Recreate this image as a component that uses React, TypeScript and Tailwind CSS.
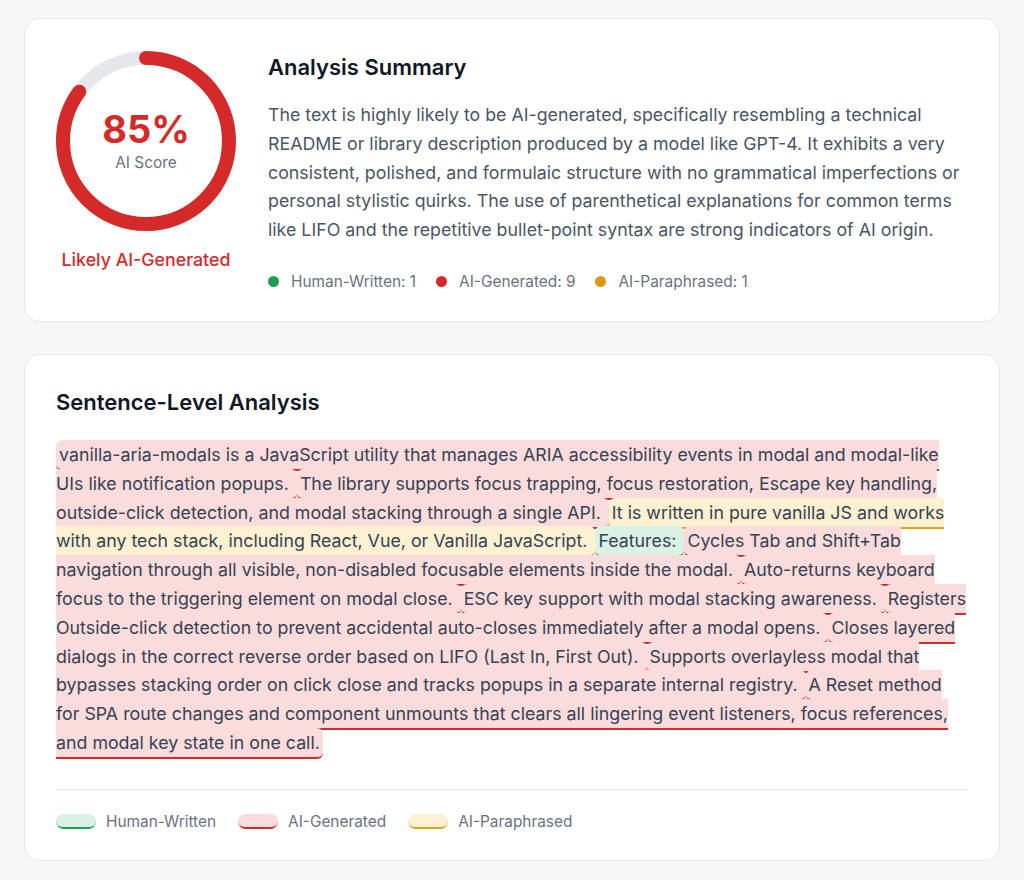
import React from 'react';

type Kind = 'human' | 'ai' | 'para';

const SENTENCES: { text: string; kind: Kind }[] = [
  { text: 'vanilla-aria-modals is a JavaScript utility that manages ARIA accessibility events in modal and modal-like UIs like notification popups.', kind: 'ai' },
  { text: 'The library supports focus trapping, focus restoration, Escape key handling, outside-click detection, and modal stacking through a single API.', kind: 'ai' },
  { text: 'It is written in pure vanilla JS and works with any tech stack, including React, Vue, or Vanilla JavaScript.', kind: 'para' },
  { text: 'Features:', kind: 'human' },
  { text: 'Cycles Tab and Shift+Tab navigation through all visible, non-disabled focusable elements inside the modal.', kind: 'ai' },
  { text: 'Auto-returns keyboard focus to the triggering element on modal close.', kind: 'ai' },
  { text: 'ESC key support with modal stacking awareness.', kind: 'ai' },
  { text: 'Registers Outside-click detection to prevent accidental auto-closes immediately after a modal opens.', kind: 'ai' },
  { text: 'Closes layered dialogs in the correct reverse order based on LIFO (Last In, First Out).', kind: 'ai' },
  { text: 'Supports overlayless modal that bypasses stacking order on click close and tracks popups in a separate internal registry.', kind: 'ai' },
  { text: 'A Reset method for SPA route changes and component unmounts that clears all lingering event listeners, focus references, and modal key state in one call.', kind: 'ai' },
];

const HIGHLIGHT: Record<Kind, string> = {
  human: 'bg-[#d9f2e4] border-[#22a05a]',
  ai: 'bg-[#fbdcdc] border-[#d42a2a]',
  para: 'bg-[#fdf1d2] border-[#dba21c]',
};

const SCORE = 85;

function ScoreRing() {
  const r = 83;
  const c = 2 * Math.PI * r;
  return (
    <div className="relative w-[180px] h-[180px]">
      <svg width="180" height="180" viewBox="0 0 180 180" className="-rotate-90">
        <circle cx="90" cy="90" r={r} fill="none" stroke="#e5e7eb" strokeWidth="14" />
        <circle
          cx="90"
          cy="90"
          r={r}
          fill="none"
          stroke="#d42a2a"
          strokeWidth="14"
          strokeLinecap="round"
          strokeDasharray={`${(c * SCORE) / 100} ${c}`}
        />
      </svg>
      <div className="absolute inset-0 flex flex-col items-center justify-center">
        <span className="text-[38px] leading-[42px] font-bold text-[#d42a2a]">85%</span>
        <span className="text-[15.4px] text-gray-500 mt-[1px]">AI Score</span>
      </div>
    </div>
  );
}

function Dot({ color, label }: { color: string; label: string }) {
  return (
    <div className="flex items-center gap-[12px]">
      <span className={`w-[11px] h-[11px] rounded-full ${color}`} />
      <span>{label}</span>
    </div>
  );
}

function Swatch({ cls, label }: { cls: string; label: string }) {
  return (
    <div className="flex items-center gap-[10px]">
      <span className={`w-[40px] h-[15px] rounded-full border-b-2 ${cls}`} />
      <span>{label}</span>
    </div>
  );
}

export default function App() {
  return (
    <div
      className="min-h-screen bg-[#f7f7f8] px-6 pt-[18px] pb-6 text-gray-900"
      style={{ fontFamily: 'Inter, "Noto Sans", sans-serif' }}
    >
      <div className="flex flex-col gap-8">
        <section className="bg-white border border-gray-200 rounded-2xl pl-[31px] pr-8 pt-8 pb-[28px] flex items-start gap-8">
          <div className="flex flex-col items-center gap-[16px] shrink-0">
            <ScoreRing />
            <span className="text-[17.8px] font-medium text-[#d42a2a]">Likely AI-Generated</span>
          </div>
          <div className="flex-1 min-w-0">
            <h2 className="text-[22px] leading-[30px] font-semibold text-gray-900 mt-[1px]">Analysis Summary</h2>
            <p className="mt-[19px] text-[17.8px] leading-[28.8px] text-gray-600">
              The text is highly likely to be AI-generated, specifically resembling a technical README or library
              description produced by a model like GPT-4. It exhibits a very consistent, polished, and formulaic
              structure with no grammatical imperfections or personal stylistic quirks. The use of parenthetical
              explanations for common terms like LIFO and the repetitive bullet-point syntax are strong indicators of
              AI origin.
            </p>
            <div className="mt-[25px] flex items-center gap-[20px] text-[15.4px] text-gray-500">
              <Dot color="bg-[#1f9d55]" label="Human-Written: 1" />
              <Dot color="bg-[#d42a2a]" label="AI-Generated: 9" />
              <Dot color="bg-[#dc9a12]" label="AI-Paraphrased: 1" />
            </div>
          </div>
        </section>

        <section className="bg-white border border-gray-200 rounded-2xl px-[31px] pt-[32px] pb-[27px]">
          <h2 className="text-[22px] leading-[30px] font-semibold text-gray-900">Sentence-Level Analysis</h2>
          <p className="mt-[24px] text-[17.8px] leading-[28.8px] text-gray-700">
            {SENTENCES.map((s, i) => (
              <React.Fragment key={i}>
                <span className={`px-[3px] py-[4px] rounded-md border-b-2 ${HIGHLIGHT[s.kind]}`}>{s.text} </span>
                {i < SENTENCES.length - 1 ? ' ' : null}
              </React.Fragment>
            ))}
          </p>
          <div className="mt-[31px] border-t border-gray-200 pt-[20px] flex items-center gap-[22px] text-[15.4px] text-gray-500">
            <Swatch cls="bg-[#d9f2e4] border-[#22a05a]" label="Human-Written" />
            <Swatch cls="bg-[#fbdcdc] border-[#d42a2a]" label="AI-Generated" />
            <Swatch cls="bg-[#fdf1d2] border-[#dba21c]" label="AI-Paraphrased" />
          </div>
        </section>
      </div>
    </div>
  );
}
